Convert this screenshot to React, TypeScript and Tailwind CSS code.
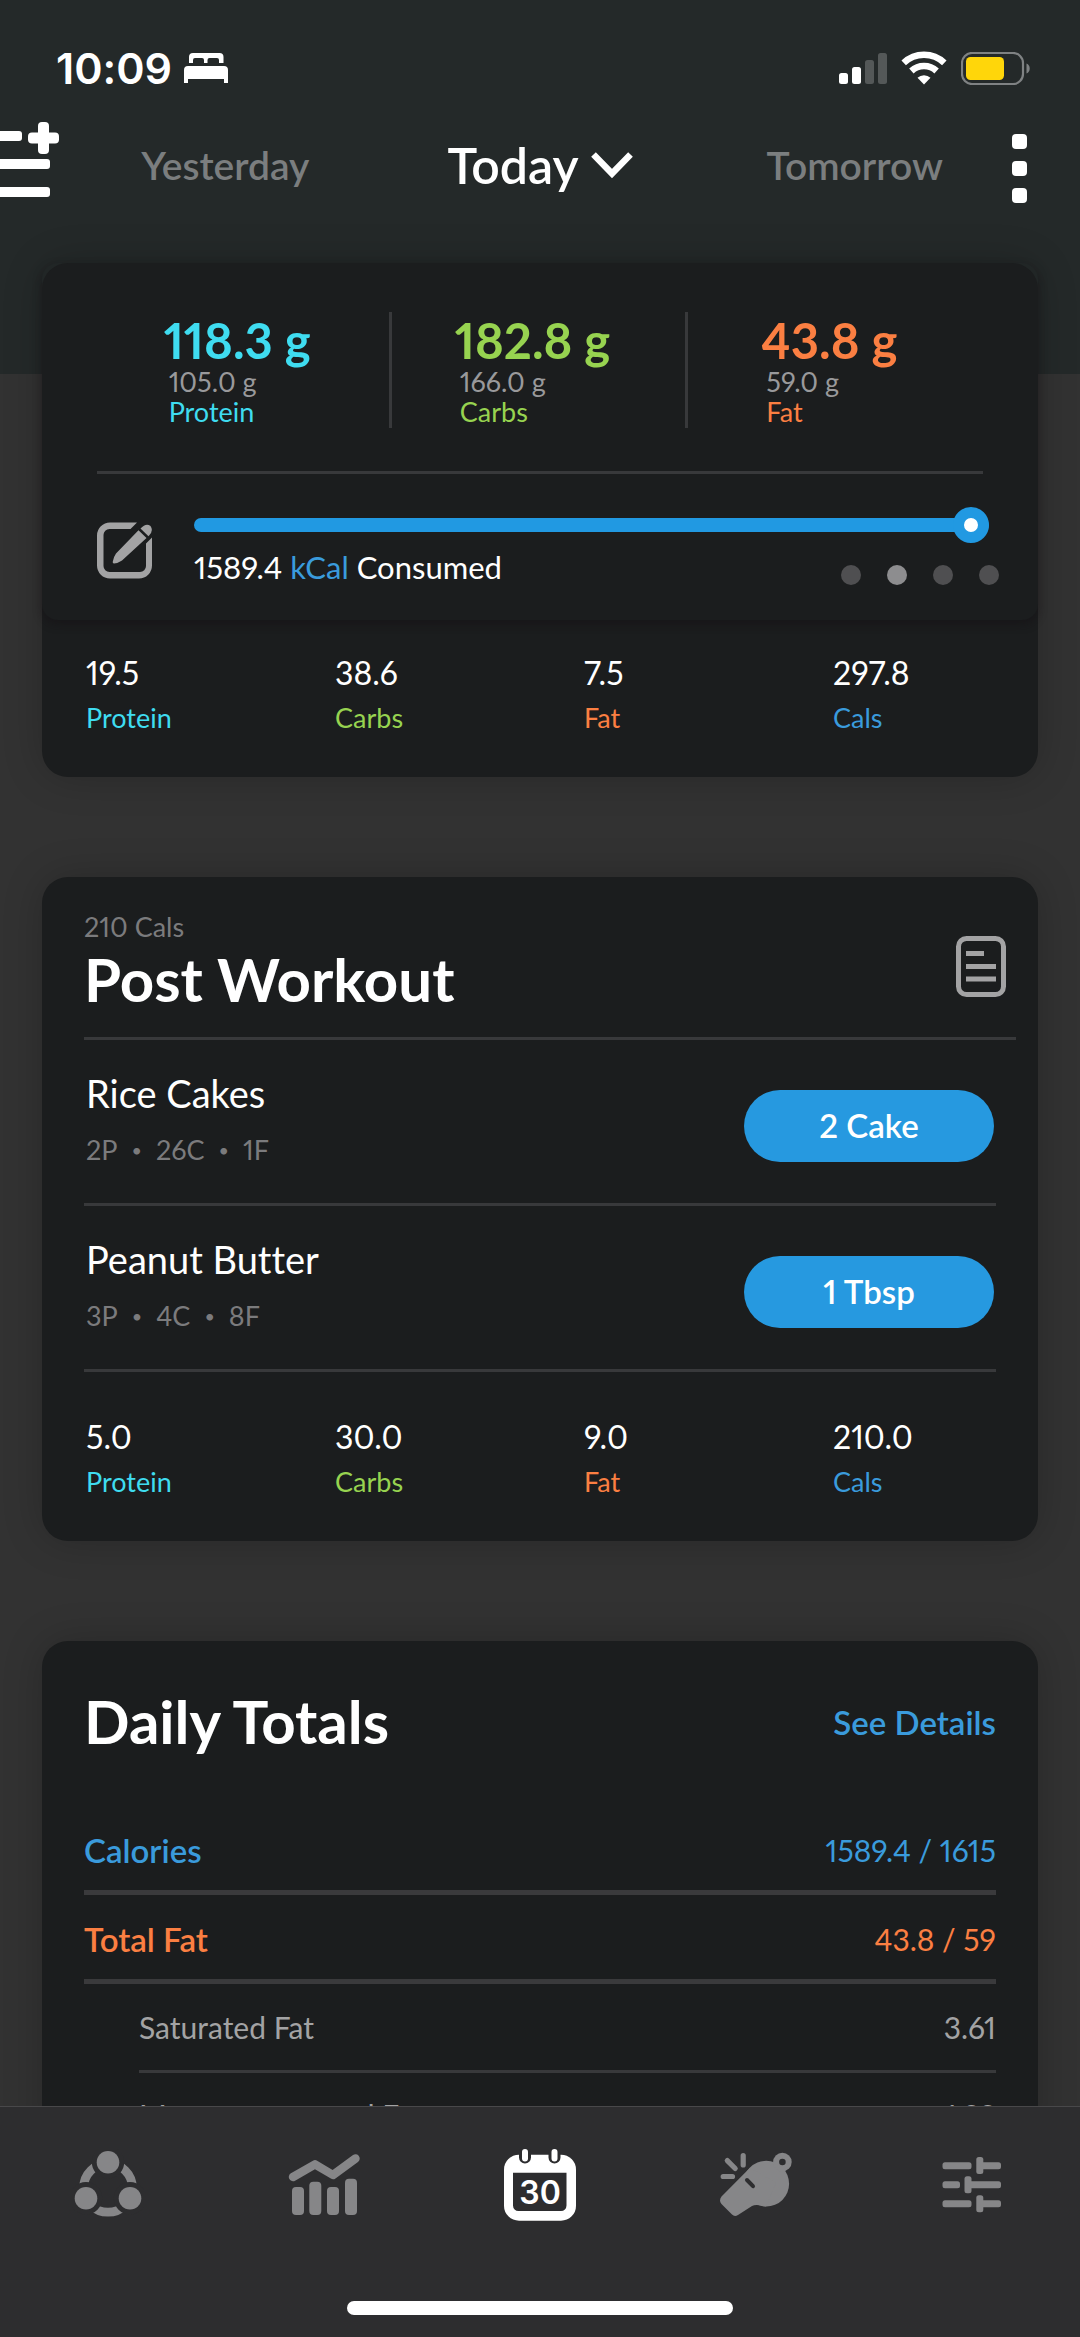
import type { ReactNode } from "react";

type Macro = "protein" | "carbs" | "fat" | "cals";

const macroColor: Record<Macro, string> = {
  protein: "text-[#3fdcf0]",
  carbs: "text-[#97d350]",
  fat: "text-[#fb7f42]",
  cals: "text-[#3a9bdc]",
};

const macroLabel: Record<Macro, string> = {
  protein: "Protein",
  carbs: "Carbs",
  fat: "Fat",
  cals: "Cals",
};

const goals: { macro: Macro; eaten: string; goal: string }[] = [
  { macro: "protein", eaten: "118.3 g", goal: "105.0 g" },
  { macro: "carbs", eaten: "182.8 g", goal: "166.0 g" },
  { macro: "fat", eaten: "43.8 g", goal: "59.0 g" },
];

const foods = [
  { name: "Rice Cakes", macros: ["2P", "26C", "1F"], serving: "2 Cake" },
  { name: "Peanut Butter", macros: ["3P", "4C", "8F"], serving: "1 Tbsp" },
];

function BedIcon() {
  return (
    <svg viewBox="0 0 44 30" className="w-11 h-[30px]" fill="white" aria-hidden="true">
      <path d="M5 10V4a4 4 0 0 1 4-4h26.500a4 4 0 0 1 4 4v6H35V7a2 2 0 0 0-2-2h-7.500a2 2 0 0 0-2 2v3h-3.500V7a2 2 0 0 0-2-2H11a2 2 0 0 0-2 2v3z" />
      <path d="M0 30V17a4 4 0 0 1 4-4h36a4 4 0 0 1 4 4v13h-4v-4H4v4z" />
    </svg>
  );
}

function SignalIcon() {
  return (
    <svg viewBox="0 0 48 33" className="w-12 h-[33px]" aria-hidden="true">
      <rect x="0" y="21" width="9" height="11" rx="2.500" fill="white" />
      <rect x="13" y="15" width="9" height="17" rx="2.500" fill="white" />
      <rect x="26" y="8" width="9" height="24" rx="2.500" fill="#545858" />
      <rect x="39" y="1" width="9" height="31" rx="2.500" fill="#545858" />
    </svg>
  );
}

function WifiIcon() {
  return (
    <svg viewBox="0 0 46 35" className="w-[46px] h-[35px]" aria-hidden="true">
      <g fill="none" stroke="white" strokeWidth="6.500">
        <path d="M2.700 11.800A29.500 29.500 0 0 1 43.300 11.800" />
        <path d="M10.400 20A18.500 18.500 0 0 1 35.600 20" />
      </g>
      <path d="M23 33.500L16.500 26.800A9.600 9.600 0 0 1 29.500 26.800Z" fill="white" />
    </svg>
  );
}

function BatteryIcon() {
  return (
    <svg viewBox="0 0 71 33" className="w-[71px] h-[33px]" aria-hidden="true">
      <rect x="1" y="1" width="61" height="31" rx="10" fill="none" stroke="#7f8283" strokeWidth="2.200" />
      <rect x="5" y="5" width="38" height="23" rx="4.500" fill="#ffd60a" />
      <path d="M65.500 11.500a5.500 5.500 0 0 1 0 10z" fill="#7f8283" />
    </svg>
  );
}

function ListPlusIcon() {
  return (
    <svg viewBox="0 0 60 75" className="w-[60px] h-[75px]" fill="white" aria-hidden="true">
      <rect x="-8" y="9" width="30" height="10" rx="3" />
      <rect x="-8" y="37" width="58" height="10" rx="3" />
      <rect x="-8" y="65" width="58" height="10" rx="3" />
      <rect x="38" y="0" width="11" height="32" rx="4" />
      <rect x="28" y="10.500" width="31" height="11" rx="4" />
    </svg>
  );
}

function EditIcon() {
  return (
    <svg viewBox="0 0 56 57" className="w-14 h-[57px]" aria-hidden="true">
      <path
        d="M40 0.500H13A13 13 0 0 0 0 13.500V43.500A13 13 0 0 0 13 56.500H42A13 13 0 0 0 55 43.500V15.500L49 21.500V44A6 6 0 0 1 43 50H12.500A6 6 0 0 1 6.500 44V13A6 6 0 0 1 12.500 7H33.500Z"
        fill="#a3a3a4"
      />
      <path d="M41.500 8.300L49.500 16L25 38.600Q21 41.300 17 41.600Q15.300 41.600 15.800 39.600Q16.500 35 19 31.500Z" fill="#a3a3a4" />
      <path d="M43.500 6.500Q49 0.500 53.500 4Q57 9 51.500 14.200Z" fill="#a3a3a4" />
    </svg>
  );
}

function NoteIcon() {
  return (
    <svg viewBox="0 0 50 61" className="w-[50px] h-[61px]" fill="none" stroke="#a3a3a4" strokeWidth="5" aria-hidden="true">
      <rect x="2.500" y="2.500" width="45" height="56" rx="8" />
      <path d="M10 17.500h18M10 30.500h30M10 43h30" />
    </svg>
  );
}

function ShareIcon() {
  return (
    <svg viewBox="0 0 72 73" className="w-[72px] h-[73px]" aria-hidden="true">
      <circle cx="36" cy="38.800" r="24.400" fill="none" stroke="#868688" strokeWidth="8.800" />
      <g fill="#2d2d2f">
        <circle cx="36" cy="13.300" r="16.200" />
        <circle cx="14" cy="49.300" r="16.200" />
        <circle cx="58" cy="49.300" r="16.200" />
      </g>
      <g fill="#868688">
        <circle cx="36" cy="13.300" r="11.300" />
        <circle cx="14" cy="49.300" r="11.300" />
        <circle cx="58" cy="49.300" r="11.300" />
      </g>
    </svg>
  );
}

function ChartIcon() {
  return (
    <svg viewBox="0 0 72 73" className="w-[72px] h-[73px]" fill="#868688" aria-hidden="true">
      <path
        d="M5 28L27 15.300L45 26L67.500 9.500"
        fill="none"
        stroke="#868688"
        strokeWidth="8.400"
        strokeLinecap="round"
        strokeLinejoin="round"
      />
      <rect x="4" y="38" width="12" height="28" rx="4" />
      <rect x="21.300" y="32.700" width="12" height="33.300" rx="4" />
      <rect x="39" y="38" width="12" height="28" rx="4" />
      <rect x="57" y="29.700" width="12" height="36.300" rx="4" />
    </svg>
  );
}

function CalendarIcon() {
  return (
    <svg viewBox="0 0 72 73" className="w-[72px] h-[73px]" aria-hidden="true">
      <rect x="0" y="5.700" width="72" height="66" rx="15" fill="white" />
      <path d="M9 23.700H62.500V56.500A5.500 5.500 0 0 1 57 62H14.500A5.500 5.500 0 0 1 9 56.500Z" fill="#2d2d2f" />
      <g strokeLinecap="round">
        <path d="M21 3v5.500M50.500 3v5.500" stroke="#2d2d2f" strokeWidth="12" />
        <path d="M21 3v6.500M50.500 3v6.500" stroke="white" strokeWidth="6" />
      </g>
      <text x="36" y="55" textAnchor="middle" fill="white" className="font-['Inter',sans-serif] font-semibold text-[32px]">
        30
      </text>
    </svg>
  );
}

function WhistleIcon() {
  return (
    <svg viewBox="0 0 72 73" className="w-[72px] h-[73px]" aria-hidden="true">
      <path
        d="M23.200 6.500V16M7.300 11.600L15.200 19.500M3.200 27.500H12.500"
        fill="none"
        stroke="#868688"
        strokeWidth="5.200"
        strokeLinecap="round"
      />
      <g fill="#868688">
        <circle cx="46.200" cy="34.700" r="22.900" />
        <path d="M30 18.700L1.500 47.500Q-1.500 51.500 1.500 55L12 65.500Q14.500 68 18 66L32 57Q36 54.500 46 57.600L56 34Z" />
        <circle cx="62.400" cy="13" r="9.300" />
      </g>
      <circle cx="62.400" cy="13" r="3.300" fill="#2d2d2f" />
      <path d="M27 31L33 37.200" stroke="#2d2d2f" strokeWidth="4" strokeLinecap="round" />
    </svg>
  );
}

function SlidersIcon() {
  return (
    <svg viewBox="0 0 72 73" className="w-[72px] h-[73px]" fill="#868688" aria-hidden="true">
      <rect x="6.500" y="13.200" width="29" height="7" rx="2.500" />
      <rect x="42" y="13.200" width="23" height="7" rx="2.500" />
      <rect x="40.300" y="8" width="7" height="17" rx="2.500" />
      <rect x="6.500" y="32.200" width="17.500" height="7" rx="2.500" />
      <rect x="30" y="32.200" width="35" height="7" rx="2.500" />
      <rect x="28.500" y="27.200" width="7" height="17" rx="2.500" />
      <rect x="6.500" y="51.200" width="29" height="7" rx="2.500" />
      <rect x="42" y="51.200" width="23" height="7" rx="2.500" />
      <rect x="40.300" y="46.200" width="7" height="17" rx="2.500" />
    </svg>
  );
}

function Card({ children }: { children: ReactNode }) {
  return (
    <section className="shrink-0 rounded-[26px] bg-[#1b1d1e] shadow-[0_0_40px_rgba(0,0,0,0.2)]">
      {children}
    </section>
  );
}

function MacroSummary({ values }: { values: [Macro, string][] }) {
  return (
    <dl className="grid grid-cols-4 pt-[33px] pb-[43px]">
      {values.map(([macro, value]) => (
        <div key={macro} className="flex flex-col-reverse gap-[9px] pl-11">
          <dt className={`text-[27px] leading-8 ${macroColor[macro]}`}>{macroLabel[macro]}</dt>
          <dd className="text-[32px] leading-10">{value}</dd>
        </div>
      ))}
    </dl>
  );
}

function StatusBar() {
  return (
    <div className="flex items-center justify-between pl-14 pr-12 leading-[48px]">
      <div className="flex items-center gap-3">
        <span className="font-['Inter',sans-serif] font-semibold text-[43px]">10:09</span>
        <BedIcon />
      </div>
      <div className="flex items-center gap-[14px]">
        <SignalIcon />
        <WifiIcon />
        <BatteryIcon />
      </div>
    </div>
  );
}

function DayNav() {
  return (
    <div className="mt-[27px] flex h-[92px] items-center">
      <button type="button" aria-label="Add to list" className="w-[68px] pb-[11px]">
        <ListPlusIcon />
      </button>
      <div className="grid flex-1 grid-cols-3 items-center">
        <button type="button" className="text-[39px] font-semibold text-[#7b7e7f]">
          Yesterday
        </button>
        <button type="button" className="flex items-center justify-center gap-3 text-[50px] font-semibold">
          Today
          <svg viewBox="0 0 42 27" className="w-[42px] h-[27px]" fill="none" stroke="white" strokeWidth="6.500" aria-hidden="true">
            <path d="M2.500 2.500L21 21.500L39.500 2.500" />
          </svg>
        </button>
        <button type="button" className="text-[39px] font-semibold text-[#7b7e7f]">
          Tomorrow
        </button>
      </div>
      <button type="button" aria-label="More" className="flex w-[68px] flex-col gap-3 pt-[6px]">
        <span className="size-[15px] rounded-[4px] bg-white" />
        <span className="size-[15px] rounded-[4px] bg-white" />
        <span className="size-[15px] rounded-[4px] bg-white" />
      </button>
    </div>
  );
}

function GoalsPanel() {
  return (
    <div className="rounded-2xl pt-[49px] pb-[35px] shadow-[0_4px_10px_rgba(20,14,18,0.45)]">
      <div className="mx-[55px] grid h-[116px] grid-cols-3 divide-x-3 divide-[#38393b]">
        {goals.map((g) => (
          <div key={g.macro} className="flex items-center justify-center pr-3">
            <div>
              <p className={`text-[49px] leading-[54px] font-bold ${macroColor[g.macro]}`}>{g.eaten}</p>
              <p className="pl-[5px] text-[27px] leading-[30px] text-[#99999b]">{g.goal}</p>
              <p className={`pl-[5px] text-[27px] leading-[30px] ${macroColor[g.macro]}`}>{macroLabel[g.macro]}</p>
            </div>
          </div>
        ))}
      </div>
      <hr className="mx-[55px] mt-[43px] border-t-3 border-[#38393b]" />
      <div className="mt-[33px] flex items-end gap-[41px] pl-[55px] pr-[39px]">
        <button type="button" aria-label="Edit goals" className="mb-[6px]">
          <EditIcon />
        </button>
        <div className="flex-1">
          <div className="flex pr-[10px]">
            <input
              type="range"
              aria-label="Calories consumed"
              defaultValue={100}
              className="h-9 w-full appearance-none bg-transparent [&::-webkit-slider-runnable-track]:h-[14px] [&::-webkit-slider-runnable-track]:rounded-full [&::-webkit-slider-runnable-track]:bg-[#2199e2] [&::-webkit-slider-thumb]:-mt-[11px] [&::-webkit-slider-thumb]:size-9 [&::-webkit-slider-thumb]:appearance-none [&::-webkit-slider-thumb]:rounded-full [&::-webkit-slider-thumb]:border-[11px] [&::-webkit-slider-thumb]:border-solid [&::-webkit-slider-thumb]:border-[#2199e2] [&::-webkit-slider-thumb]:bg-white"
            />
          </div>
          <div className="mt-[6px] flex items-end justify-between">
            <p className="text-[31px] leading-9">
              1589.4 <span className={macroColor.cals}>kCal</span> Consumed
            </p>
            <div className="flex gap-[26px]">
              <span className="size-5 rounded-full bg-[#4f4f51]" />
              <span className="size-5 rounded-full bg-[#8d8d8f]" />
              <span className="size-5 rounded-full bg-[#4f4f51]" />
              <span className="size-5 rounded-full bg-[#4f4f51]" />
            </div>
          </div>
        </div>
      </div>
    </div>
  );
}

function MealCard() {
  return (
    <Card>
      <div className="ml-[42px] mr-[22px] flex items-end justify-between border-b-3 border-[#38393b] pt-[34px] pb-[26px] pr-[10px]">
        <div>
          <p className="text-[27px] leading-8 text-[#7b7b7d]">210 Cals</p>
          <h2 className="mt-1 text-[60px] leading-[64px] font-bold">Post Workout</h2>
        </div>
        <button type="button" aria-label="Meal notes" className="mb-[14px]">
          <NoteIcon />
        </button>
      </div>
      <ul className="mx-[42px] mb-3">
        {foods.map((food) => (
          <li key={food.name} className="flex items-end justify-between border-b-3 border-[#38393b] px-[2px] pt-8 pb-[37px]">
            <div>
              <p className="text-[38px] leading-[42px]">{food.name}</p>
              <p className="mt-5 flex gap-[14px] text-[27px] leading-8 text-[#7b7b7d]">
                <span>{food.macros[0]}</span>
                <span className="text-[18px]">•</span>
                <span>{food.macros[1]}</span>
                <span className="text-[18px]">•</span>
                <span>{food.macros[2]}</span>
              </p>
            </div>
            <button type="button" className="mb-1 h-[72px] w-[250px] rounded-full bg-[#2699e0] text-[33px] font-semibold">
              {food.serving}
            </button>
          </li>
        ))}
      </ul>
      <MacroSummary values={[["protein", "5.0"], ["carbs", "30.0"], ["fat", "9.0"], ["cals", "210.0"]]} />
    </Card>
  );
}

function TotalsCard() {
  return (
    <Card>
      <div className="px-[42px] pt-12">
        <div className="mb-[53px] flex items-center justify-between">
          <h2 className="text-[60px] leading-[64px] font-bold">Daily Totals</h2>
          <a href="#details" className={`pt-1 text-[33px] font-semibold ${macroColor.cals}`}>
            See Details
          </a>
        </div>
        <div className={`flex justify-between border-b-5 border-[#3a3a3c] pt-6 pb-5 leading-10 ${macroColor.cals}`}>
          <span className="text-[33px] font-semibold">Calories</span>
          <span className="text-[30px]">1589.4 / 1615</span>
        </div>
        <div className={`flex justify-between border-b-5 border-[#3a3a3c] pt-6 pb-5 leading-10 ${macroColor.fat}`}>
          <span className="text-[33px] font-semibold">Total Fat</span>
          <span className="text-[30px]">43.8 / 59</span>
        </div>
        <div className="ml-[55px] flex justify-between border-b-3 border-[#38393b] pt-[23px] pb-[23px] text-[30px] leading-10 text-[#a3a3a4]">
          <span>Saturated Fat</span>
          <span>3.61</span>
        </div>
        <div className="ml-[55px] flex justify-between pt-[22px] pb-6 text-[30px] leading-10 text-[#a3a3a4]">
          <span>Monounsaturated Fat</span>
          <span>1.99</span>
        </div>
      </div>
    </Card>
  );
}

const tabs = [
  { label: "Community", icon: <ShareIcon /> },
  { label: "Progress", icon: <ChartIcon /> },
  { label: "Calendar", icon: <CalendarIcon /> },
  { label: "Coach", icon: <WhistleIcon /> },
  { label: "Settings", icon: <SlidersIcon /> },
];

export default function App() {
  return (
    <div className="flex h-screen flex-col overflow-hidden bg-[#323232] font-['Lato','Liberation_Sans',sans-serif] proportional-nums [font-variant-ligatures:none] text-white">
      <header className="shrink-0 bg-[#242929] pt-[44px] pb-[163px]">
        <StatusBar />
        <DayNav />
      </header>

      <main className="-mt-[111px] flex min-h-0 flex-1 flex-col gap-[100px] px-[42px]">
        <Card>
          <GoalsPanel />
          <MacroSummary values={[["protein", "19.5"], ["carbs", "38.6"], ["fat", "7.5"], ["cals", "297.8"]]} />
        </Card>
        <MealCard />
        <TotalsCard />
      </main>

      <nav className="relative z-10 shrink-0 border-t border-[#48484a] bg-[#2d2d2f] pt-[42px] pb-[22px]">
        <div className="grid grid-cols-5">
          {tabs.map((tab) => (
            <button key={tab.label} type="button" aria-label={tab.label} className="flex justify-center">
              {tab.icon}
            </button>
          ))}
        </div>
        <div className="mx-auto mt-[79px] h-[14px] w-[386px] rounded-full bg-white" />
      </nav>
    </div>
  );
}
